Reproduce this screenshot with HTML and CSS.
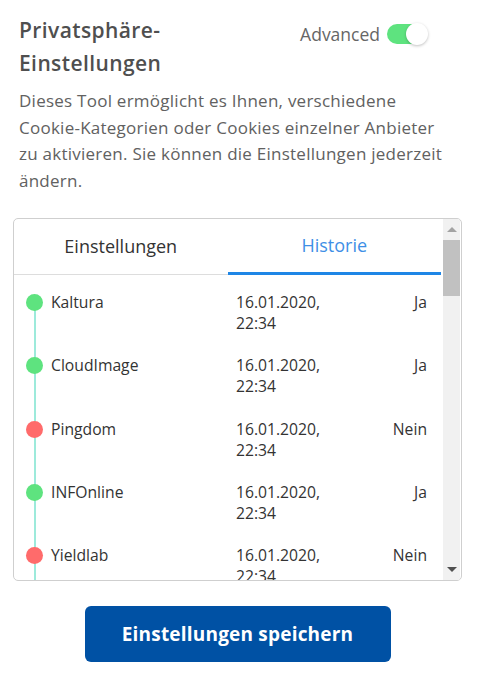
FILE: index.html
```html
<!DOCTYPE html>
<html lang="de">
<head>
<meta charset="utf-8">
<link rel="stylesheet" href="styles.css">
</head>
<body>
<div class="panel">
  <div class="header">
    <h1 class="title">Privatsphäre-<br>Einstellungen</h1>
    <div class="advanced">
      <span class="adv-label">Advanced</span>
      <span class="toggle"><span class="knob"></span></span>
    </div>
  </div>
  <p class="desc">Dieses Tool ermöglicht es Ihnen, verschiedene Cookie-Kategorien oder Cookies einzelner Anbieter zu aktivieren. Sie können die Einstellungen jederzeit ändern.</p>
  <div class="box">
    <div class="main">
      <div class="tabs">
        <div class="tab">Einstellungen</div>
        <div class="tab active">Historie</div>
      </div>
      <div class="list">
        <div class="row">
          <span class="dot green"></span>
          <span class="name">Kaltura</span>
          <span class="date">16.01.2020,<br>22:34</span>
          <span class="val">Ja</span>
        </div>
        <div class="row">
          <span class="dot green"></span>
          <span class="name">CloudImage</span>
          <span class="date">16.01.2020,<br>22:34</span>
          <span class="val">Ja</span>
        </div>
        <div class="row">
          <span class="dot red"></span>
          <span class="name">Pingdom</span>
          <span class="date">16.01.2020,<br>22:34</span>
          <span class="val">Nein</span>
        </div>
        <div class="row">
          <span class="dot green"></span>
          <span class="name">INFOnline</span>
          <span class="date">16.01.2020,<br>22:34</span>
          <span class="val">Ja</span>
        </div>
        <div class="row">
          <span class="dot red"></span>
          <span class="name">Yieldlab</span>
          <span class="date">16.01.2020,<br>22:34</span>
          <span class="val">Nein</span>
        </div>
      </div>
    </div>
    <div class="scrollbar">
      <span class="arrow up"></span>
      <span class="thumb"></span>
      <span class="track"></span>
      <span class="arrow down"></span>
    </div>
  </div>
  <div class="actions">
    <button class="save">Einstellungen speichern</button>
  </div>
</div>
</body>
</html>
```
FILE: styles.css
```css
* { box-sizing: border-box; }
html, body { margin: 0; padding: 0; background: #fff; }
body {
  font-family: "Open Sans", Lato, "Liberation Sans", sans-serif;
  color: #555;
  width: 482px;
  height: 680px;
  overflow: hidden;
}
.panel { padding: 14px 20px 0 13px; }
.header {
  display: flex;
  justify-content: space-between;
  align-items: flex-start;
  padding-left: 6px;
}
.title {
  margin: 0;
  font-size: 21px;
  font-weight: 600;
  letter-spacing: 0.4px;
  line-height: 33px;
  color: #4f4f4f;
}
.advanced {
  display: flex;
  align-items: center;
  gap: 7px;
  padding-top: 8px;
  padding-right: 35px;
}
.adv-label { font-size: 17.5px; color: #666; }
.toggle {
  position: relative;
  width: 40px;
  height: 20px;
  border-radius: 10px;
  background: #5ee37f;
  display: inline-block;
}
.knob {
  position: absolute;
  right: -1px;
  top: -1px;
  width: 22px;
  height: 22px;
  border-radius: 50%;
  background: #fff;
  box-shadow: 0 1px 3px rgba(0,0,0,0.25);
}
.desc {
  margin: 8px 12px 0 6px;
  font-size: 17px;
  letter-spacing: 0.25px;
  line-height: 26.5px;
  color: #616161;
}
.box {
  margin-top: 24px;
  height: 363px;
  border: 1px solid #cfcfcf;
  border-radius: 5px;
  display: flex;
  overflow: hidden;
}
.main { width: 427px; overflow: hidden; }
.tabs {
  display: flex;
  border-bottom: 1px solid #ddd;
  height: 56px;
}
.tab {
  flex: 1;
  display: flex;
  align-items: center;
  justify-content: center;
  font-size: 18px;
  color: #333;
  padding-bottom: 2px;
}
.tab.active {
  color: #3e8fe6;
  border-bottom: 3px solid #1e86e6;
  margin-bottom: -1px;
}
.list { padding: 17px 14px 0 12px; }
.row {
  display: grid;
  grid-template-columns: 25px 185px 1fr auto;
  align-items: start;
  height: 63.25px;
  position: relative;
  font-size: 15.7px;
  line-height: 21px;
  color: #333;
}
.row::before {
  content: "";
  position: absolute;
  left: 8px;
  top: 0;
  bottom: 0;
  width: 2px;
  background: #9deadb;
}
.row:first-child::before { top: 10px; }
.dot {
  position: relative;
  width: 17px;
  height: 17px;
  border-radius: 50%;
  margin-top: 2px;
}
.dot.green { background: #5ee37f; }
.dot.red { background: #ff6b6b; }
.val { text-align: right; }
.scrollbar {
  width: 17px;
  margin-left: 2px;
  background: #f1f1f1;
  display: flex;
  flex-direction: column;
  align-items: center;
}
.arrow { width: 0; height: 0; border-left: 5px solid transparent; border-right: 5px solid transparent; }
.arrow.up { border-bottom: 5px solid #a3a3a3; margin-top: 8px; margin-bottom: 8px; }
.arrow.down { border-top: 5px solid #505050; margin-bottom: 8px; }
.thumb { width: 17px; height: 56px; background: #c1c1c1; }
.track { flex: 1; }
.actions { display: flex; justify-content: center; margin-top: 25px; }
.save {
  width: 306px;
  height: 56px;
  border: none;
  border-radius: 6px;
  background: #0051a4;
  color: #fff;
  font-family: inherit;
  font-size: 19px;
  font-weight: 700;
  letter-spacing: 0.2px;
}
```
